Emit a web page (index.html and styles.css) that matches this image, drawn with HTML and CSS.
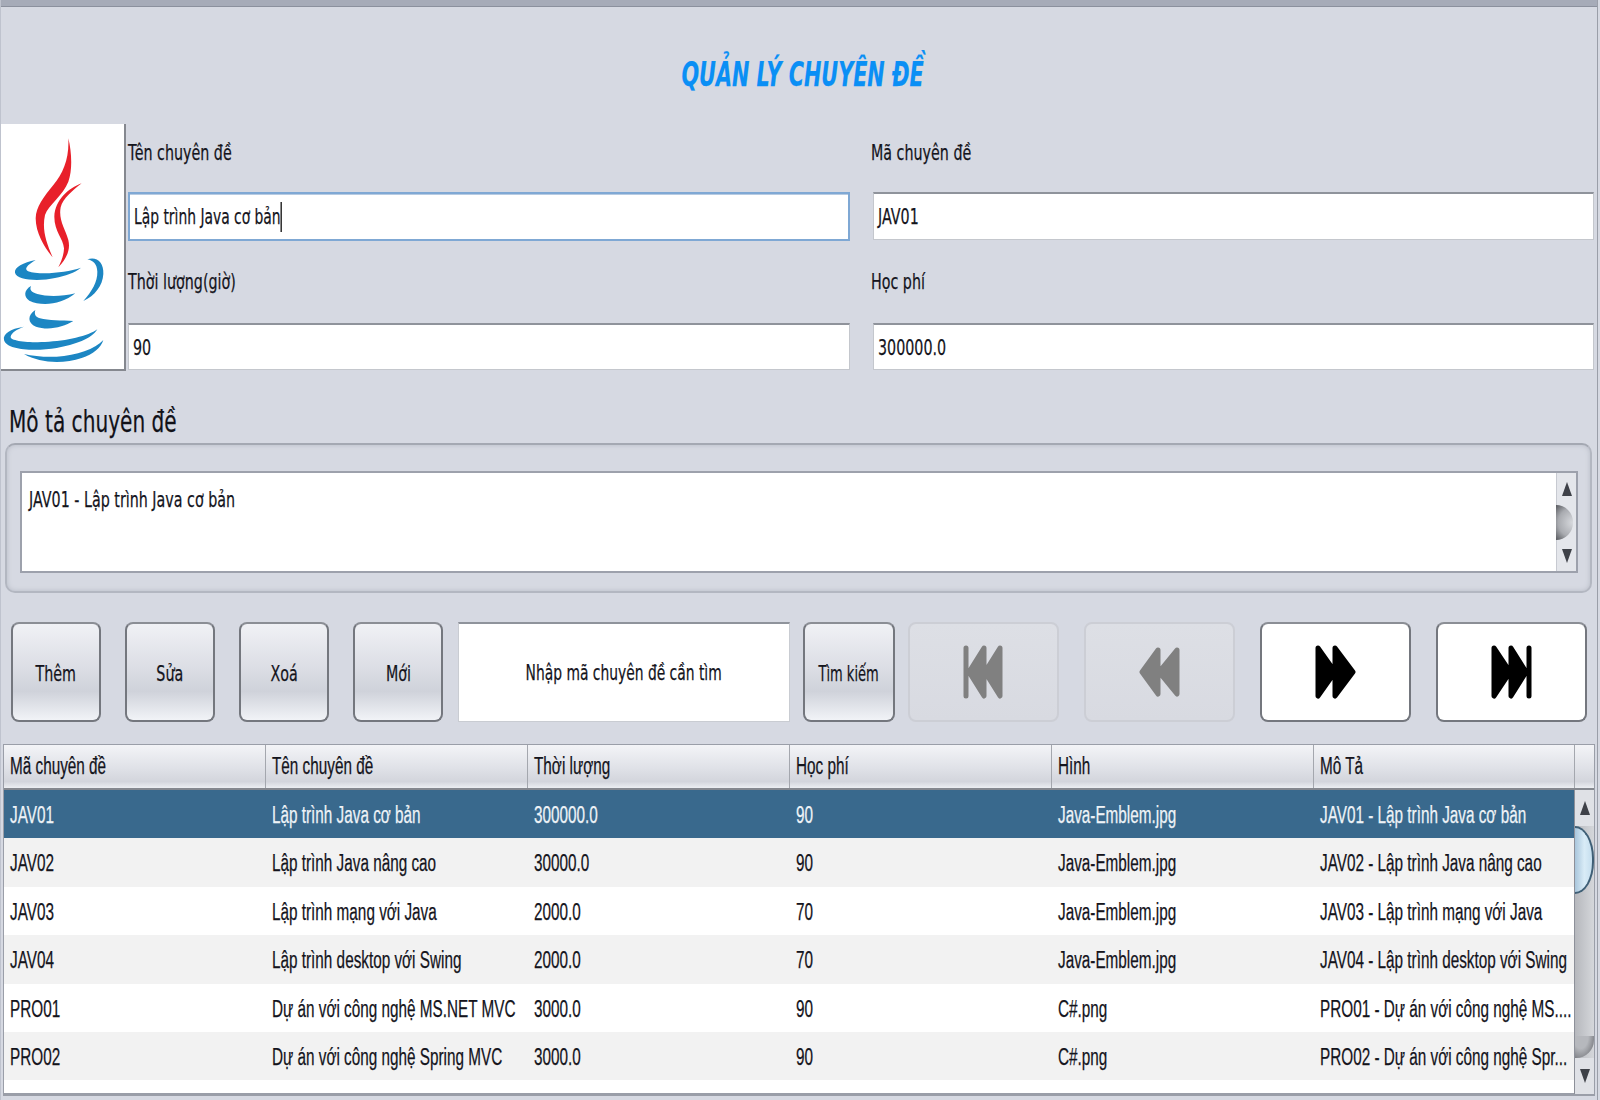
FILE: index.html
```html
<!DOCTYPE html>
<html lang="en">

<head>
    <meta charset="UTF-8">
    <meta name="viewport" content="width=device-width, initial-scale=1.0">
    <title>Quản lý chuyên đề</title>
    <link rel="stylesheet" href="styles.css">
</head>

<body>
    <div class="topbar"></div>
    <h1 class="title"><span class="squeeze mid">QUẢN LÝ CHUYÊN ĐỀ</span></h1>

    <div class="info">
        <div class="logo">
            <svg viewBox="0 12 372 735" width="124" height="245">
                <!--flames-->
                <path fill="#e8202a" d="M205 55C208 115 190 160 160 195C130 232 108 260 107 295C107 340 135 385 158 412C140 370 125 330 135 285C145 255 190 225 205 185C218 150 215 95 205 55Z" />
                <path fill="#e8202a" d="M245 190C205 205 165 240 163 290C163 335 190 355 192 385C192 405 183 425 175 442C200 415 212 390 205 360C195 325 175 300 182 262C188 235 220 210 245 190Z" />
                <!--cup-->
                <path fill="#1c86c3" d="M107 420C70 428 42 442 45 458C50 482 120 484 165 474C195 468 225 458 243 443C205 455 150 463 105 458C75 455 65 445 107 420Z" />
                <path fill="#1c86c3" d="M262 418C288 408 312 425 310 462C308 497 285 527 250 543C275 515 293 485 292 455C291 432 280 422 262 418Z" />
                <path fill="#1c86c3" d="M93 498C72 510 70 530 88 542C125 560 185 554 226 520C185 530 140 530 112 522C94 517 88 510 93 498Z" />
                <path fill="#1c86c3" d="M106 570C82 585 82 610 108 620C145 632 190 622 220 603C185 601 145 602 120 595C106 591 102 582 106 570Z" />
                <path fill="#1c86c3" d="M72 620C30 626 8 642 12 660C20 692 110 694 170 684C225 674 275 657 292 628C265 648 200 663 135 666C85 668 30 663 32 650C34 638 50 628 72 620Z" />
                <path fill="#1c86c3" d="M72 702C120 730 190 732 245 714C280 702 302 684 310 660C285 688 230 706 170 710C135 712 100 708 72 702Z" />
            </svg>
        </div>
        <div class="fields">
            <div class="field-group">
                <label class="field-label"><span class="squeeze">Tên chuyên đề</span></label>
                <div class="input focused"><span class="squeeze caret">Lập trình Java cơ bản</span></div>
            </div>
            <div class="field-group right">
                <label class="field-label"><span class="squeeze">Mã chuyên đề</span></label>
                <div class="input"><span class="squeeze">JAV01</span></div>
            </div>
            <div class="field-group second">
                <label class="field-label"><span class="squeeze">Thời lượng(giờ)</span></label>
                <div class="input"><span class="squeeze">90</span></div>
            </div>
            <div class="field-group right second">
                <label class="field-label"><span class="squeeze">Học phí</span></label>
                <div class="input"><span class="squeeze">300000.0</span></div>
            </div>
        </div>
    </div>

    <h2 class="desc-title"><span class="squeeze">Mô tả chuyên đề</span></h2>
    <div class="desc-box">
        <div class="desc-area">
            <div class="desc-text"><span class="squeeze">JAV01 - Lập trình Java cơ bản</span></div>
            <div class="vscroll small">
                <div class="arrow up"></div>
                <div class="knob"></div>
                <div class="arrow down"></div>
            </div>
        </div>
    </div>

    <div class="toolbar">
        <button class="btn crud"><span class="squeeze mid">Thêm</span></button>
        <button class="btn crud"><span class="squeeze mid">Sửa</span></button>
        <button class="btn crud"><span class="squeeze mid">Xoá</span></button>
        <button class="btn crud"><span class="squeeze mid">Mới</span></button>
        <div class="search"><span class="squeeze mid">Nhập mã chuyên đề cần tìm</span></div>
        <button class="btn find"><span class="squeeze mid">Tìm kiếm</span></button>
        <button class="btn nav off">
            <svg viewBox="0 0 41 54" width="41" height="54">
                <path d="M3 3V51M37 3L22 27L37 51ZM21 3L6 27L21 51Z" />
            </svg>
        </button>
        <button class="btn nav off">
            <svg viewBox="0 0 41 50" width="41" height="50">
                <path d="M19 3L3 25L19 47ZM38 3L20 25L38 47Z" />
            </svg>
        </button>
        <button class="btn nav on">
            <svg viewBox="0 0 41 54" width="41" height="54">
                <path d="M3 3L20 27L3 51ZM20 3L38 27L20 51Z" />
            </svg>
        </button>
        <button class="btn nav on">
            <svg viewBox="0 0 41 54" width="41" height="54">
                <path d="M3 3L19 27L3 51ZM20 3L35 27L20 51ZM38 3V51" />
            </svg>
        </button>
    </div>

    <div class="grid-wrap">
        <div class="grid-head">
            <div class="th"><span class="squeeze">Mã chuyên đề</span></div>
            <div class="th"><span class="squeeze">Tên chuyên đề</span></div>
            <div class="th"><span class="squeeze">Thời lượng</span></div>
            <div class="th"><span class="squeeze">Học phí</span></div>
            <div class="th"><span class="squeeze">Hình</span></div>
            <div class="th"><span class="squeeze">Mô Tả</span></div>
            <div class="th"></div>
        </div>
        <div class="grid-body">
            <div class="rows" id="rows">
                <div class="row selected">
                    <div class="td"><span class="squeeze">JAV01</span></div>
                    <div class="td"><span class="squeeze">Lập trình Java cơ bản</span></div>
                    <div class="td"><span class="squeeze">300000.0</span></div>
                    <div class="td"><span class="squeeze">90</span></div>
                    <div class="td"><span class="squeeze">Java-Emblem.jpg</span></div>
                    <div class="td"><span class="squeeze">JAV01 - Lập trình Java cơ bản</span></div>
                </div>
                <div class="row alt">
                    <div class="td"><span class="squeeze">JAV02</span></div>
                    <div class="td"><span class="squeeze">Lập trình Java nâng cao</span></div>
                    <div class="td"><span class="squeeze">30000.0</span></div>
                    <div class="td"><span class="squeeze">90</span></div>
                    <div class="td"><span class="squeeze">Java-Emblem.jpg</span></div>
                    <div class="td"><span class="squeeze">JAV02 - Lập trình Java nâng cao</span></div>
                </div>
                <div class="row">
                    <div class="td"><span class="squeeze">JAV03</span></div>
                    <div class="td"><span class="squeeze">Lập trình mạng với Java</span></div>
                    <div class="td"><span class="squeeze">2000.0</span></div>
                    <div class="td"><span class="squeeze">70</span></div>
                    <div class="td"><span class="squeeze">Java-Emblem.jpg</span></div>
                    <div class="td"><span class="squeeze">JAV03 - Lập trình mạng với Java</span></div>
                </div>
                <div class="row alt">
                    <div class="td"><span class="squeeze">JAV04</span></div>
                    <div class="td"><span class="squeeze">Lập trình desktop với Swing</span></div>
                    <div class="td"><span class="squeeze">2000.0</span></div>
                    <div class="td"><span class="squeeze">70</span></div>
                    <div class="td"><span class="squeeze">Java-Emblem.jpg</span></div>
                    <div class="td"><span class="squeeze">JAV04 - Lập trình desktop với Swing</span></div>
                </div>
                <div class="row">
                    <div class="td"><span class="squeeze">PRO01</span></div>
                    <div class="td"><span class="squeeze">Dự án với công nghệ MS.NET MVC</span></div>
                    <div class="td"><span class="squeeze">3000.0</span></div>
                    <div class="td"><span class="squeeze">90</span></div>
                    <div class="td"><span class="squeeze">C#.png</span></div>
                    <div class="td"><span class="squeeze">PRO01 - Dự án với công nghệ MS....</span></div>
                </div>
                <div class="row alt">
                    <div class="td"><span class="squeeze">PRO02</span></div>
                    <div class="td"><span class="squeeze">Dự án với công nghệ Spring MVC</span></div>
                    <div class="td"><span class="squeeze">3000.0</span></div>
                    <div class="td"><span class="squeeze">90</span></div>
                    <div class="td"><span class="squeeze">C#.png</span></div>
                    <div class="td"><span class="squeeze">PRO02 - Dự án với công nghệ Spr...</span></div>
                </div>
            </div>
            <div class="vscroll big">
                <div class="arrow up"></div>
                <div class="track">
                    <div class="thumb"></div>
                    <div class="track-end"></div>
                </div>
                <div class="arrow down"></div>
            </div>
        </div>
    </div>
</body>

</html>
```

FILE: styles.css
```css
html,
body {
    margin: 0;
    padding: 0;
}

html {
    background-color: #d6d9e2;
}

body {
    background-color: #d6d9e2;
    font-family: "DejaVu Sans", sans-serif;
    color: #14141c;
    width: 1598px;
    height: 1100px;
    overflow: hidden;
    border-left: 1px solid #bfc3ce;
    border-right: 1px solid #9a9ea8;
    box-sizing: border-box;
    position: relative;
}

/* the original is stretched tall, so text gets narrowed on x */
.squeeze {
    display: inline-block;
    white-space: nowrap;
    transform: scaleX(0.68);
    transform-origin: left center;
    -webkit-text-stroke: 0.25px currentColor;
}

.squeeze.mid {
    transform-origin: center center;
}

.topbar {
    height: 7px;
    margin-left: -1px;
    background-color: #a6abb8;
    border-bottom: 1px solid #8b909d;
    box-sizing: border-box;
}

.title {
    margin: 0;
    height: 117px;
    box-sizing: border-box;
    padding: 45px 0 0 8px;
    text-align: center;
    color: #0a8ff5;
    font-family: "DejaVu Sans", sans-serif;
    font-size: 34px;
    line-height: 44px;
    font-style: italic;
    font-weight: bold;
}

.title .squeeze {
    transform: scaleX(0.61);
}

.info {
    display: flex;
    height: 247px;
}

.logo {
    width: 126px;
    margin-left: -1px;
    flex-shrink: 0;
    box-sizing: border-box;
    background-color: #fff;
    border-right: 2px solid #85888f;
    border-bottom: 2px solid #85888f;
}

.logo svg {
    display: block;
}

.fields {
    flex: 1;
    display: grid;
    grid-template-columns: 742px 725px;
    grid-template-rows: 117px 130px;
    padding-left: 1px;
}

.field-group {
    display: flex;
    flex-direction: column;
}

.field-label {
    height: 68px;
    padding: 11px 0 0 1px;
    box-sizing: border-box;
    font-size: 21px;
    line-height: 36px;
}

.field-group.second .field-label {
    height: 82px;
    padding-top: 23px;
}

.field-group.right .field-label {
    margin-left: 1px;
}

.input {
    height: 48px;
    box-sizing: border-box;
    margin-left: 1px;
    width: 722px;
    background-color: #fff;
    border: 1px solid #c4c7cd;
    border-top: 2px solid #8f939b;
    padding-left: 4px;
    font-size: 21px;
    line-height: 46px;
}

.field-group.right .input {
    margin-left: 4px;
    width: 721px;
}

.input.focused {
    height: 49px;
    border: 2px solid #7fa8d4;
    box-shadow: inset 0 1px 0 #b7cbe2;
}

.input.focused .squeeze {
    transform: scaleX(0.66);
}

.field-group.second .input {
    height: 47px;
}

.caret {
    border-right: 2px solid #111;
    line-height: 30px;
}

.desc-title {
    margin: 0;
    height: 72px;
    padding: 33px 0 0 8px;
    box-sizing: border-box;
    font-size: 30px;
    line-height: 36px;
    font-weight: normal;
    color: #111118;
}

.desc-title .squeeze {
    transform: scaleX(0.67);
}

.desc-box {
    margin-left: 4px;
    width: 1587px;
    height: 150px;
    box-sizing: border-box;
    border: 2px solid #b3b7c1;
    border-top-color: #a4a8b2;
    border-radius: 10px;
    box-shadow: inset 0 0 5px #b8bcc6;
    padding: 26px 13px 0;
}

.desc-area {
    display: flex;
    width: 1558px;
    height: 102px;
    box-sizing: border-box;
    background-color: #fff;
    border: 2px solid #9da1ac;
}

.desc-text {
    flex: 1;
    padding: 12px 7px;
    font-size: 21px;
    line-height: 30px;
}

.vscroll {
    width: 20px;
    flex-shrink: 0;
    display: flex;
    flex-direction: column;
    background-color: #e2e4e9;
    border-left: 1px solid #c7cad1;
    box-sizing: border-box;
}

.arrow {
    height: 32px;
    display: flex;
    align-items: center;
    justify-content: center;
    flex-shrink: 0;
}

.arrow.up::before {
    content: "";
    border-left: 5px solid transparent;
    border-right: 5px solid transparent;
    border-bottom: 14px solid #3e4148;
}

.arrow.down::before {
    content: "";
    border-left: 5px solid transparent;
    border-right: 5px solid transparent;
    border-top: 14px solid #3e4148;
}

.vscroll.small {
    justify-content: space-between;
    background-color: #e4e6eb;
}

.knob {
    width: 17px;
    height: 35px;
    border-radius: 0 18px 18px 0;
    background: radial-gradient(circle at 100% 50%, #d8dade 0, #a9abb0 60%, #55575c 100%);
    flex-shrink: 0;
    margin-left: -1px;
}

.toolbar {
    display: flex;
    margin-top: 29px;
    height: 100px;
    padding-left: 10px;
}

.btn {
    font-family: inherit;
    font-size: 21px;
    color: #14141c;
    padding: 3px 0 0;
    height: 100px;
    flex-shrink: 0;
    box-sizing: border-box;
    border: 2px solid #74777e;
    border-top-color: #8b8e95;
    border-radius: 8px;
    background: linear-gradient(#f0f1f5, #dcdee5 45%, #cfd2da 70%, #f1f3f7);
    display: flex;
    align-items: center;
    justify-content: center;
    overflow: visible;
    white-space: nowrap;
}

.btn.crud {
    width: 90px;
    margin-right: 24px;
}

.btn.crud:nth-child(4) {
    margin-right: 15px;
}

.search {
    width: 332px;
    height: 100px;
    flex-shrink: 0;
    box-sizing: border-box;
    background-color: #fff;
    border: 1px solid #c9ccd2;
    border-top: 2px solid #8f939b;
    margin-right: 13px;
    display: flex;
    align-items: center;
    justify-content: center;
    font-size: 21px;
}

.search .squeeze {
    transform: scaleX(0.66);
}

.btn.find {
    width: 92px;
    margin-right: 13px;
}

.btn.find .squeeze {
    transform: scaleX(0.62);
}

.btn.nav {
    width: 151px;
    margin-right: 25px;
    padding-top: 0;
}

.btn.nav:last-child {
    margin-right: 0;
}

.btn.nav svg {
    stroke-width: 5;
    stroke-linejoin: round;
    stroke-linecap: round;
}

.btn.nav.off {
    border: 2px solid #ccced5;
    background: linear-gradient(#dddfe5, #d8dae1);
}

.btn.nav.off svg {
    fill: #808080;
    stroke: #808080;
}

.btn.nav.on {
    background: #fff;
}

.btn.nav.on svg {
    fill: #000;
    stroke: #000;
}

.grid-wrap {
    margin: 22px 0 0 2px;
    width: 1592px;
    height: 352px;
    box-sizing: border-box;
    border: 1px solid #9a9ea8;
    border-bottom: 3px solid #9a9ea8;
    background-color: #fff;
    font-family: "Liberation Sans", Arial, sans-serif;
}

.grid-head {
    display: grid;
    grid-template-columns: 262px 262px 262px 262px 262px 261px 1fr;
    height: 45px;
    border-bottom: 2px solid #85888f;
    box-sizing: border-box;
    background: linear-gradient(#f3f4f7, #dfe1e7 55%, #d3d5dc 85%, #eceef2);
}

.th {
    padding-left: 6px;
    border-right: 1px solid #a4a7ae;
    box-sizing: border-box;
    font-size: 23px;
    line-height: 43px;
    overflow: hidden;
}

.th:last-child {
    border-right: none;
}

.th .squeeze,
.td .squeeze {
    transform: scaleX(0.665);
}

.grid-body {
    display: flex;
    height: 304px;
}

.rows {
    flex: 1;
    overflow: hidden;
}

.row {
    display: grid;
    grid-template-columns: repeat(5, 262px) 261px;
    height: 48.4px;
}

.row.alt {
    background-color: #f2f2f2;
}

.row.selected {
    background-color: #39698d;
    color: #eef3f7;
}

.td {
    padding-left: 6px;
    font-size: 23px;
    line-height: 50px;
    overflow: hidden;
}

.vscroll.big {
    width: 20px;
    background-color: #dfe1e6;
    border-left: 1px solid #8d9099;
}

.vscroll.big .arrow {
    height: 36px;
}

.track {
    flex: 1;
    display: flex;
    flex-direction: column;
    background: linear-gradient(90deg, #b6b8bd, #d5d7db);
    position: relative;
}

.thumb {
    height: 68px;
    background: linear-gradient(90deg, #a9c6dc, #d9ecf7 55%, #c5deee);
    border: 2px solid #3f5f76;
    border-left: none;
    border-radius: 0 20px 20px 0 / 0 34px 34px 0;
    box-sizing: border-box;
    flex-shrink: 0;
}

.track-end {
    position: absolute;
    left: 0;
    right: 0;
    bottom: 0;
    height: 22px;
    border-radius: 0 0 18px 0;
    background: radial-gradient(ellipse at 30% 0, #b6b8bd 40%, #5d5f64 100%);
}
```
